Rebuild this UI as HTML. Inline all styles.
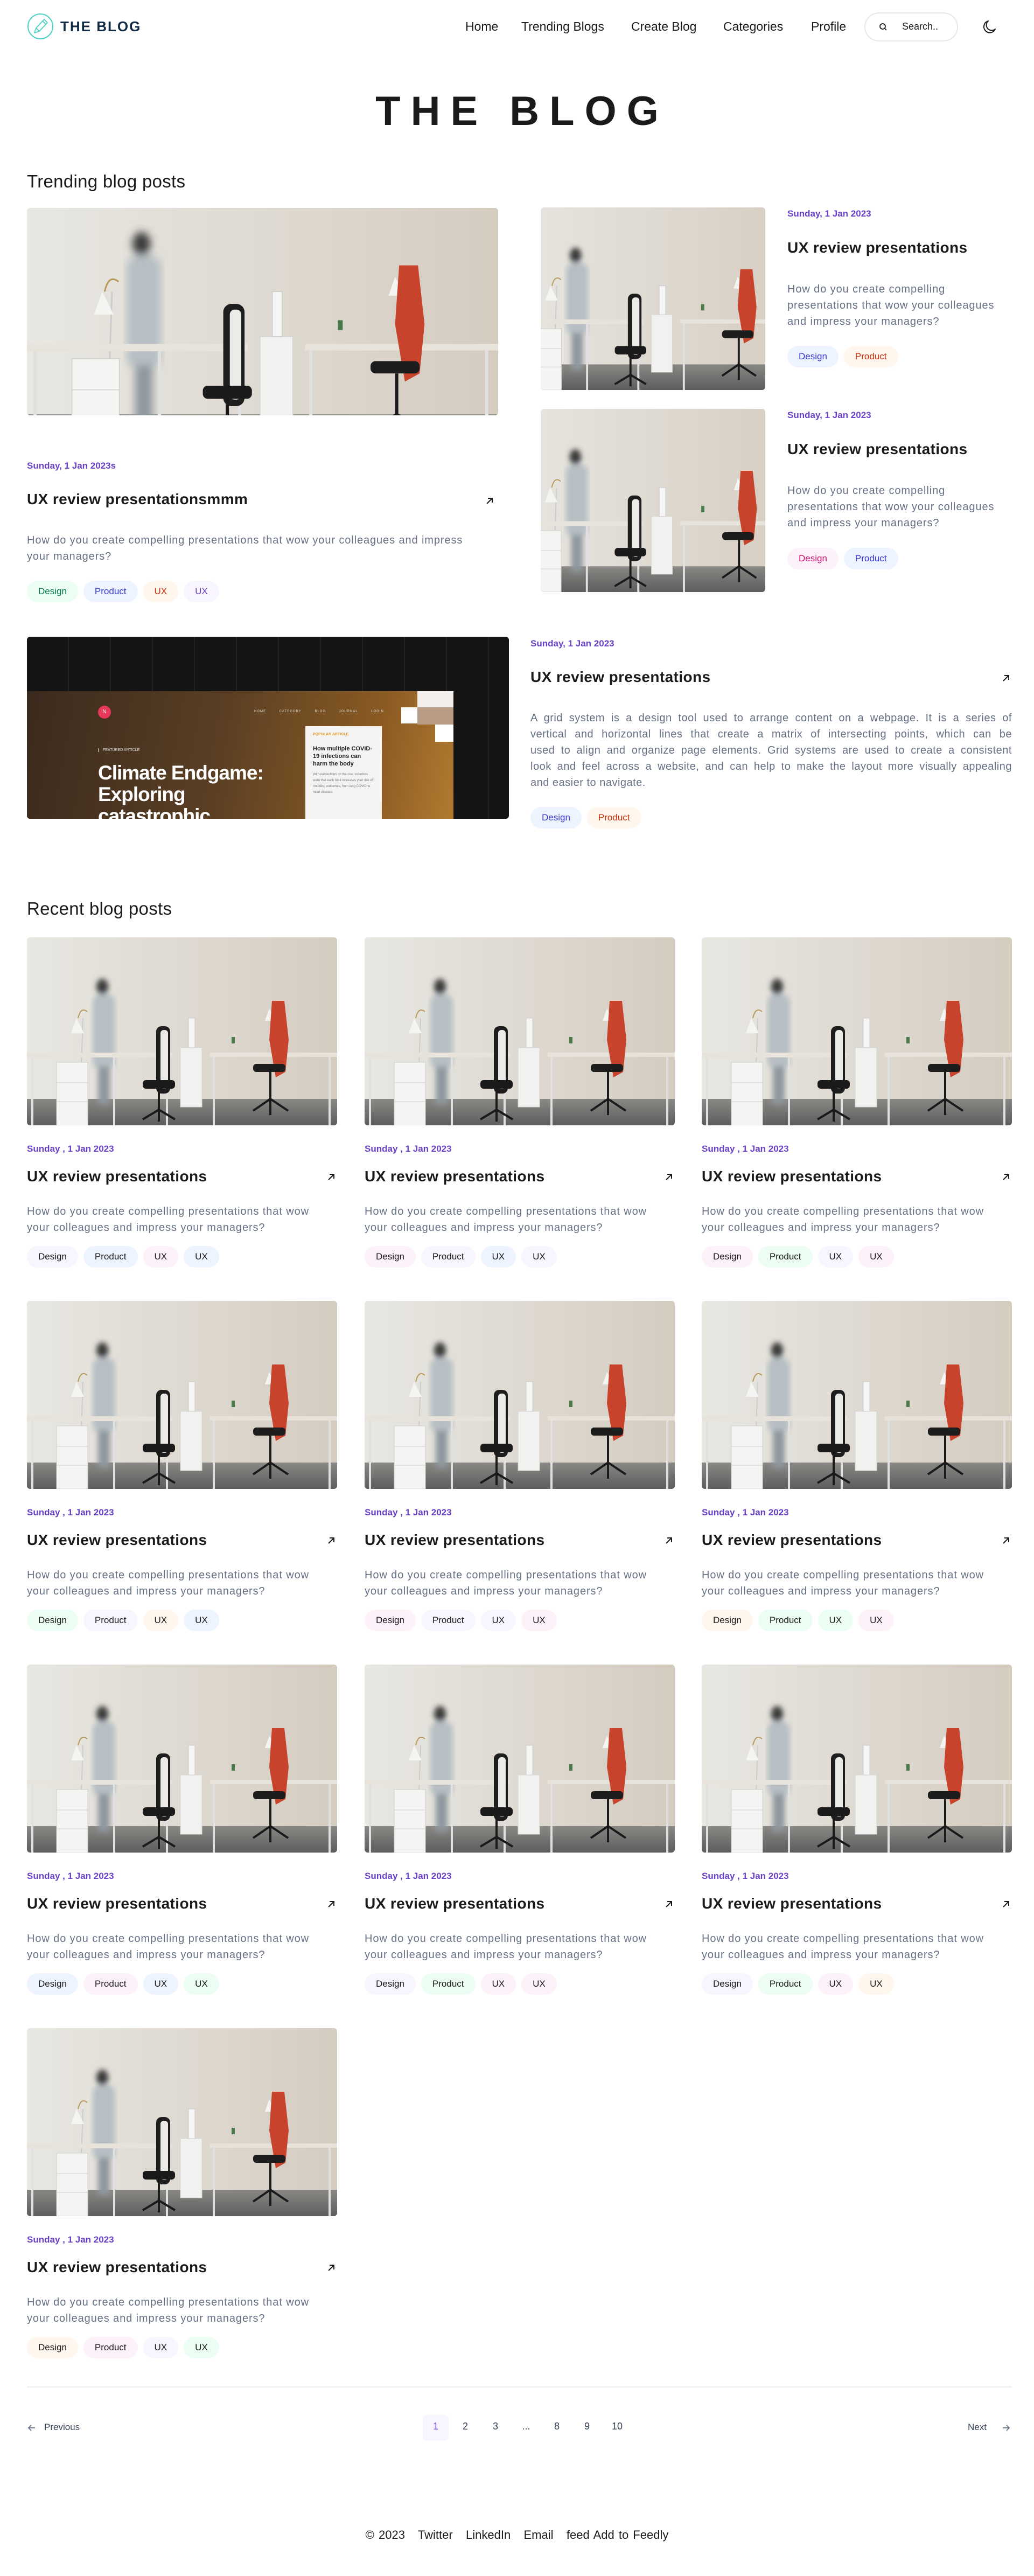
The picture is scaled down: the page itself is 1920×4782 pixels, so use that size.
<!DOCTYPE html>
<html><head><meta charset="utf-8">
<style>
*{margin:0;padding:0;box-sizing:border-box}
body{width:1920px;height:4782px;background:#fff;font-family:"Liberation Sans",Arial,sans-serif;color:#1a1a1a;position:relative;overflow:hidden}
.a{position:absolute}
.nav a{position:absolute;top:36px;font-size:23px;color:#1a1a1a;text-decoration:none;white-space:nowrap}
.img{position:absolute;overflow:hidden;border-radius:6px}
.img svg{width:100%;height:100%;display:block}
.date{position:absolute;font-size:17px;font-weight:bold;color:#6941C6;white-space:nowrap}
.title{position:absolute;font-size:28px;font-weight:bold;color:#1a1a1a;white-space:nowrap;letter-spacing:.4px}
.desc{position:absolute;font-size:20px;line-height:30px;color:#667085;letter-spacing:.9px;white-space:nowrap}
.tags{position:absolute;display:flex;gap:10px}
.tag{height:40px;line-height:40px;padding:0 21px;border-radius:20px;font-size:17px;color:#1a1a1a;white-space:nowrap}
.g{background:#ECFDF3}.b{background:#EEF4FF}.o{background:#FFF6ED}.p{background:#F9F5FF}.k{background:#FDF2FA}
.c .g{color:#027A48}.c .b{color:#3538CD}.c .o{color:#C4320A}.c .p{color:#6941C6}.c .k{color:#C11574}
.arr{position:absolute;width:18px;height:18px}
.h2{position:absolute;left:50px;font-size:33px;color:#1a1a1a;letter-spacing:.3px}
.pg{position:absolute;top:4494px;font-size:18px;color:#344054;width:44px;text-align:center}
.jl{text-align:justify;text-align-last:justify;white-space:normal}
</style></head><body>
<svg width="0" height="0" style="position:absolute">
<defs>
<linearGradient id="wall" x1="0" x2="1" y1="0" y2="0"><stop offset="0" stop-color="#e8e7e2"/><stop offset="1" stop-color="#d5ccc0"/></linearGradient>
<linearGradient id="floor" x1="0" x2="0" y1="0" y2="1"><stop offset="0" stop-color="#8a8885"/><stop offset="1" stop-color="#5e5d5c"/></linearGradient>
<filter id="bl"><feGaussianBlur stdDeviation="5"/></filter>
<symbol id="office" viewBox="0 0 576 349" preserveAspectRatio="xMidYMid slice">
<rect width="576" height="349" fill="url(#wall)"/>
<rect y="300" width="576" height="49" fill="url(#floor)"/>
<g filter="url(#bl)"><ellipse cx="140" cy="92" rx="11" ry="15" fill="#3a3a3a"/><rect x="122" y="105" width="42" height="140" rx="16" fill="#b7bfc4"/><rect x="132" y="240" width="22" height="70" fill="#8f989e"/></g>
<line x1="100" y1="268" x2="104" y2="150" stroke="#ccc" stroke-width="2"/>
<path d="M92 150 L82 178 L106 178 Z" fill="#f4f4f2"/>
<path d="M95 150 Q100 128 112 138" stroke="#b89a5a" stroke-width="2" fill="none"/>
<rect x="0" y="214" width="270" height="9" fill="#e8e3da"/>
<rect x="8" y="223" width="4" height="126" fill="#e0e0e0"/><rect x="160" y="223" width="4" height="126" fill="#e0e0e0"/><rect x="258" y="223" width="4" height="126" fill="#e0e0e0"/>
<rect x="55" y="232" width="58" height="117" fill="#f4f4f2" stroke="#cfcfcf"/>
<line x1="55" y1="270" x2="113" y2="270" stroke="#cfcfcf"/><line x1="55" y1="305" x2="113" y2="305" stroke="#cfcfcf"/>
<rect x="240" y="165" width="26" height="125" rx="10" fill="#1e1e1e"/><rect x="248" y="172" width="14" height="110" rx="6" fill="#ecebe8"/>
<rect x="215" y="265" width="60" height="16" rx="6" fill="#1a1a1a"/>
<path d="M245 281 L245 320 M245 320 L215 338 M245 320 L275 338 M245 320 L245 342" stroke="#1a1a1a" stroke-width="4"/>
<rect x="285" y="205" width="40" height="110" fill="#f1f1ef" stroke="#d6d6d6"/>
<rect x="300" y="150" width="12" height="55" fill="#f5f5f5" stroke="#ccc"/>
<rect x="340" y="214" width="236" height="8" fill="#e8e3da"/>
<rect x="345" y="222" width="4" height="127" fill="#e0e0e0"/><rect x="560" y="222" width="4" height="127" fill="#e0e0e0"/>
<line x1="455" y1="215" x2="458" y2="135" stroke="#ccc" stroke-width="2"/>
<path d="M450 132 L442 155 L462 155 Z" fill="#f4f4f2"/>
<path d="M455 118 L478 118 L486 190 L480 250 L462 260 L450 190 Z" fill="#c8432b"/>
<rect x="420" y="235" width="60" height="15" rx="6" fill="#1d1d1d"/>
<path d="M452 250 L452 300 M452 300 L420 322 M452 300 L485 322 M452 300 L452 330" stroke="#1a1a1a" stroke-width="4"/>
<rect x="380" y="185" width="6" height="12" fill="#4a7a4a"/>
</symbol>
</defs></svg>

<!-- NAV -->
<svg class="a" style="left:50px;top:24px" width="50" height="50" viewBox="0 0 50 50"><circle cx="25" cy="25" r="23" fill="none" stroke="#4fd1c5" stroke-width="2"/><path d="M14 37 L17 28 L32 12 L38 18 L23 34 Z M17 28 L23 34 M29 15 L35 21" fill="none" stroke="#4fd1c5" stroke-width="1.8" stroke-linejoin="round"/></svg>
<div class="a" style="left:112px;top:34px;font-size:26px;font-weight:bold;color:#102a43;letter-spacing:2px">THE BLOG</div>
<div class="nav">
<a style="left:864px">Home</a>
<a style="left:968px">Trending Blogs</a>
<a style="left:1172px">Create Blog</a>
<a style="left:1343px">Categories</a>
<a style="left:1506px">Profile</a>
</div>
<div class="a" style="left:1605px;top:23px;width:174px;height:54px;border:2px solid #e8e8ec;border-radius:27px"></div>
<svg class="a" style="left:1631px;top:41px" width="18" height="18" viewBox="0 0 18 18"><circle cx="8" cy="8" r="5" fill="none" stroke="#1a1a1a" stroke-width="1.8"/><path d="M12 12 L15 15" stroke="#1a1a1a" stroke-width="1.8"/></svg>
<div class="a" style="left:1675px;top:39px;font-size:18px;color:#1a1a1a">Search..</div>
<svg class="a" style="left:1822px;top:35px" width="30" height="30" viewBox="0 0 30 30"><path d="M13 4 A11 11 0 1 0 26 19 A9 9 0 0 1 13 4 Z" fill="none" stroke="#1a1a1a" stroke-width="2" stroke-linejoin="round"/></svg>

<div class="a" style="left:0;width:1920px;top:163px;text-align:center;font-size:76px;font-weight:bold;letter-spacing:19px;color:#1a1a1a;padding-left:19px">THE BLOG</div>

<div class="h2" style="top:318px">Trending blog posts</div>

<!-- trending big -->
<div class="img" style="left:50px;top:386px;width:875px;height:385px"><svg><use href="#office"/></svg></div>
<div class="date" style="left:50px;top:855px">Sunday, 1 Jan 2023s</div>
<div class="title" style="left:50px;top:911px">UX review presentationsmmm</div>
<svg class="arr" style="left:900px;top:921px" viewBox="0 0 18 18"><path d="M4 14 L14 4 M6 4 L14 4 L14 12" fill="none" stroke="#1a1a1a" stroke-width="2"/></svg>
<div class="desc" style="left:50px;top:988px;width:880px">How do you create compelling presentations that wow your colleagues and impress<br>your managers?</div>
<div class="tags c" style="left:50px;top:1078px"><div class="tag g">Design</div><div class="tag b">Product</div><div class="tag o">UX</div><div class="tag p">UX</div></div>

<!-- trending right 1 -->
<div class="img" style="left:1004px;top:385px;width:417px;height:339px"><svg><use href="#office"/></svg></div>
<div class="date" style="left:1462px;top:387px">Sunday, 1 Jan 2023</div>
<div class="title" style="left:1462px;top:444px">UX review presentations</div>
<div class="desc" style="left:1462px;top:522px;width:440px">How do you create compelling<br>presentations that wow your colleagues<br>and impress your managers?</div>
<div class="tags c" style="left:1462px;top:642px"><div class="tag b">Design</div><div class="tag o">Product</div></div>
<!-- trending right 2 -->
<div class="img" style="left:1004px;top:759px;width:417px;height:340px"><svg><use href="#office"/></svg></div>
<div class="date" style="left:1462px;top:761px">Sunday, 1 Jan 2023</div>
<div class="title" style="left:1462px;top:818px">UX review presentations</div>
<div class="desc" style="left:1462px;top:896px;width:440px">How do you create compelling<br>presentations that wow your colleagues<br>and impress your managers?</div>
<div class="tags c" style="left:1462px;top:1017px"><div class="tag k">Design</div><div class="tag b">Product</div></div>

<!-- climate -->
<div class="img" style="left:50px;top:1182px;width:895px;height:338px;background:#141414">
 <div class="a" style="left:0;top:0;width:895px;height:338px;background:repeating-linear-gradient(90deg,rgba(255,255,255,0) 0 76px,rgba(255,255,255,.06) 76px 78px)"></div>
 <div class="a" style="left:0;top:101px;width:792px;height:237px;background:linear-gradient(100deg,#3a2a1e 0%,#5a3f24 45%,#8a5a22 80%,#b07a30 100%)"></div>
 <div class="a" style="left:725px;top:101px;width:67px;height:30px;background:#f2efec"></div>
 <div class="a" style="left:695px;top:131px;width:30px;height:30px;background:#fff"></div>
 <div class="a" style="left:725px;top:131px;width:67px;height:32px;background:#b89c84"></div>
 <div class="a" style="left:758px;top:163px;width:34px;height:32px;background:#fff"></div>
 <div class="a" style="left:132px;top:128px;width:24px;height:24px;border-radius:12px;background:#e8375a;color:#fff;font-size:10px;text-align:center;line-height:24px">N</div>
 <div class="a" style="left:422px;top:136px;font-size:6px;color:#ddd;letter-spacing:1px;word-spacing:22px">HOME CATEGORY BLOG JOURNAL LOGIN</div>
 <div class="a" style="left:132px;top:207px;font-size:7px;color:#ddd;border-left:1px solid #ddd;padding-left:8px">FEATURED ARTICLE</div>
 <div class="a" style="left:132px;top:233px;width:320px;font-size:37px;line-height:40px;font-weight:bold;color:#fff;letter-spacing:-1px">Climate Endgame: Exploring catastrophic climate change scenarios</div>
 <div class="a" style="left:517px;top:166px;width:142px;height:172px;background:#f4f3f2;padding:12px 14px">
  <div style="font-size:7px;color:#e0962b;font-weight:bold">POPULAR ARTICLE</div>
  <div style="font-size:11px;line-height:14px;font-weight:bold;color:#222;margin-top:16px">How multiple COVID-19 infections can harm the body</div>
  <div style="font-size:6px;line-height:11px;color:#777;margin-top:8px">With reinfections on the rise, scientists warn that each bout increases your risk of troubling outcomes, from long COVID to heart disease.</div>
 </div>
</div>
<div class="date" style="left:985px;top:1185px">Sunday, 1 Jan 2023</div>
<div class="title" style="left:985px;top:1241px">UX review presentations</div>
<svg class="arr" style="left:1859px;top:1250px" viewBox="0 0 18 18"><path d="M4 14 L14 4 M6 4 L14 4 L14 12" fill="none" stroke="#1a1a1a" stroke-width="2"/></svg>
<div class="desc" style="left:985px;top:1318px;width:894px;letter-spacing:.5px;white-space:normal">
<div class="jl">A grid system is a design tool used to arrange content on a webpage. It is a series of</div>
<div class="jl">vertical and horizontal lines that create a matrix of intersecting points, which can be</div>
<div class="jl">used to align and organize page elements. Grid systems are used to create a consistent</div>
<div class="jl">look and feel across a website, and can help to make the layout more visually appealing</div>
<div>and easier to navigate.</div>
</div>
<div class="tags c" style="left:985px;top:1498px"><div class="tag b">Design</div><div class="tag o">Product</div></div>

<div class="h2" style="top:1668px">Recent blog posts</div>

<div id="cards"></div>
<script>
var cols=[50,677,1303],tops=[1740,2415,3090,3765];
var tg=[["p","b","k","b"],["k","p","b","p"],["k","g","p","k"],["g","p","o","b"],["k","p","p","k"],["o","g","g","k"],["b","k","b","g"],["p","g","k","k"],["p","g","k","o"],["o","k","p","g"]];
var h="";
for(var i=0;i<10;i++){var x=cols[i%3],y=tops[Math.floor(i/3)],t=tg[i];
h+='<div class="img" style="left:'+x+'px;top:'+y+'px;width:576px;height:349px"><svg><use href="#office"/></svg></div>'+
'<div class="date" style="left:'+x+'px;top:'+(y+383)+'px">Sunday , 1 Jan 2023</div>'+
'<div class="title" style="left:'+x+'px;top:'+(y+428)+'px">UX review presentations</div>'+
'<svg class="arr" style="left:'+(x+556)+'px;top:'+(y+436)+'px" viewBox="0 0 18 18"><path d="M4 14 L14 4 M6 4 L14 4 L14 12" fill="none" stroke="#1a1a1a" stroke-width="2"/></svg>'+
'<div class="desc" style="left:'+x+'px;top:'+(y+494)+'px;width:580px">How do you create compelling presentations that wow<br>your colleagues and impress your managers?</div>'+
'<div class="tags" style="left:'+x+'px;top:'+(y+573)+'px"><div class="tag '+t[0]+'">Design</div><div class="tag '+t[1]+'">Product</div><div class="tag '+t[2]+'">UX</div><div class="tag '+t[3]+'">UX</div></div>';}
document.getElementById("cards").innerHTML=h;
</script>

<!-- pagination -->
<div class="a" style="left:50px;top:4430px;width:1829px;height:2px;background:#eaecf0"></div>
<svg class="a" style="left:50px;top:4498px" width="18" height="18" viewBox="0 0 18 18"><path d="M15 9 H3 M8 4 L3 9 L8 14" fill="none" stroke="#667085" stroke-width="1.8"/></svg>
<div class="a" style="left:82px;top:4496px;font-size:17px;color:#344054">Previous</div>
<div class="a" style="left:785px;top:4483px;width:48px;height:48px;border-radius:8px;background:#F9F5FF"></div>
<div class="pg" style="left:787px;color:#7F56D9">1</div>
<div class="pg" style="left:842px">2</div>
<div class="pg" style="left:898px">3</div>
<div class="pg" style="left:955px">...</div>
<div class="pg" style="left:1012px">8</div>
<div class="pg" style="left:1068px">9</div>
<div class="pg" style="left:1124px">10</div>
<div class="a" style="left:1797px;top:4496px;font-size:17px;color:#344054">Next</div>
<svg class="a" style="left:1859px;top:4498px" width="18" height="18" viewBox="0 0 18 18"><path d="M3 9 H15 M10 4 L15 9 L10 14" fill="none" stroke="#667085" stroke-width="1.8"/></svg>

<div class="a" style="left:0;width:1920px;top:4693px;text-align:center;font-size:22px;color:#1a1a1a;word-spacing:2px">© 2023&nbsp;&nbsp; Twitter&nbsp;&nbsp; LinkedIn&nbsp;&nbsp; Email&nbsp;&nbsp; feed Add to Feedly</div>
</body></html>
